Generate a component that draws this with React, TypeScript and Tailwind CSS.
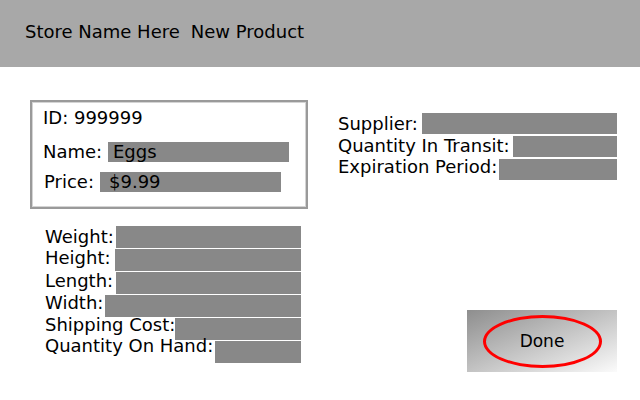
import React from 'react';

// labels sit on their own line rhythm, slightly above the field rows
const dims = [
  { label: 'Weight:', cls: 'min-w-[71px]' },
  { label: 'Height:', cls: 'min-w-[70px] mb-[4px]' },
  { label: 'Length:', cls: 'min-w-[71px] mb-[4px]' },
  { label: 'Width:', cls: 'min-w-[60px] mb-[6px]' },
  { label: 'Shipping Cost:', cls: 'min-w-[130px] mb-[8px]' },
  { label: 'Quantity On Hand:', cls: 'min-w-[170px] mb-[12px]' },
];

const supply = [
  { label: 'Supplier:', cls: 'min-w-[84px]' },
  { label: 'Quantity In Transit:', cls: 'min-w-[175px] mb-[2px]' },
  { label: 'Expiration Period:', cls: 'min-w-[161px] mb-[6px]' },
];

export default function App() {
  return (
    <div className="w-[640px] h-[400px] bg-white text-black text-[18px] leading-[22px] font-['DejaVu_Sans',sans-serif] flex flex-col">
      {/* Header */}
      <header className="h-[67px] shrink-0 bg-[#a8a8a8] flex items-start pt-[21px] pl-[25px]">
        <span>Store Name Here</span>
        <span className="ml-[11px]">New Product</span>
      </header>

      <div className="flex flex-1">
        {/* Left column */}
        <div className="ml-[30px] w-[278px] pt-[33px] flex flex-col">
          <div className="h-[109px] border-2 border-[#9a9a9a]">
            <div className="h-full border border-[#d4d4d4] pl-[10px] pt-[4px] flex flex-col">
              <div>ID: 999999</div>
              <div className="mt-[13px] h-[20px] flex items-center">
                <span className="w-[65px]">Name:</span>
                <div className="w-[181px] h-[20px] bg-[#888888] pl-[5px] flex items-center">Eggs</div>
              </div>
              <div className="mt-[10px] h-[20px] flex items-center">
                <span className="w-[57px] pl-px">Price:</span>
                <div className="w-[181px] h-[20px] bg-[#888888] pl-[9px] flex items-center">$9.99</div>
              </div>
            </div>
          </div>

          <div className="mt-[17px] pl-[15px] w-[271px] flex flex-col gap-px">
            {dims.map((d) => (
              <div key={d.label} className="h-[22px] flex items-center">
                <span className={`${d.cls} shrink-0 whitespace-nowrap`}>{d.label}</span>
                <div className="flex-1 h-[22px] bg-[#888888]" />
              </div>
            ))}
          </div>
        </div>

        {/* Right column */}
        <div className="ml-[30px] w-[279px] pt-[46px] pb-[28px] flex flex-col justify-between">
          <div className="flex flex-col gap-[2px]">
            {supply.map((s) => (
              <div key={s.label} className="h-[21px] flex items-center">
                <span className={`${s.cls} shrink-0 whitespace-nowrap`}>{s.label}</span>
                <div className="flex-1 h-[21px] bg-[#888888]" />
              </div>
            ))}
          </div>

          <button className="self-end w-[150px] h-[62px] bg-linear-to-br from-[#8e8e8e] to-[#fbfbfb] flex items-center justify-center">
            <span className="w-[119px] h-[53px] rounded-[50%] border-[3px] border-[#ff0000] flex items-center justify-center text-[17px]">
              Done
            </span>
          </button>
        </div>
      </div>
    </div>
  );
}
